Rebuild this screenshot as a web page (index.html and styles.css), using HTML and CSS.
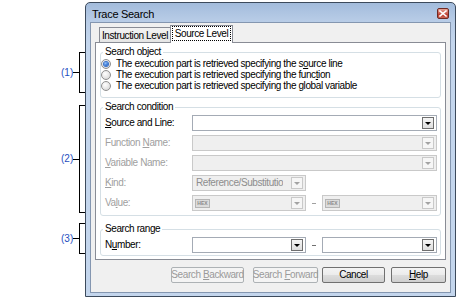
FILE: index.html
```html
<!DOCTYPE html>
<html>
<head>
<meta charset="utf-8">
<title>Trace Search</title>
<link rel="stylesheet" href="styles.css">
</head>
<body>
<div class="page">
  <div class="notes">
    <div class="note n1"><span class="num">(1)</span><span class="dash"></span><span class="brk"></span></div>
    <div class="note n2"><span class="num">(2)</span><span class="dash"></span><span class="brk"></span></div>
    <div class="note n3"><span class="num">(3)</span><span class="dash"></span><span class="brk"></span></div>
  </div>
  <div class="window">
    <div class="titlebar">
      <span class="title">Trace Search</span>
      <span class="close"><svg width="8" height="7" viewBox="0 0 8 7"><path d="M1 1L7 6M7 1L1 6" stroke="#fff" stroke-width="1.6" stroke-linecap="square"/></svg></span>
    </div>
    <div class="client">
      <div class="tabs">
        <div class="tab"><span>Instruction Level</span></div>
        <div class="tab active"><span class="focus">Source Level</span></div>
      </div>
      <div class="panel">
        <fieldset class="group g1">
          <legend>Search object</legend>
          <div class="radio"><span class="rb on"></span><span>The execution part is retrieved specifying the s<u>o</u>urce line</span></div>
          <div class="radio"><span class="rb"></span><span>The execution part is retrieved specifying the func<u>t</u>ion</span></div>
          <div class="radio"><span class="rb"></span><span>The execution part is retrieved specifying the <u>g</u>lobal variable</span></div>
        </fieldset>
        <fieldset class="group g2">
          <legend>Search condition</legend>
          <div class="row"><span class="lbl"><u>S</u>ource and Line:</span><div class="combo wide"><span class="btn"></span></div></div>
          <div class="row dis"><span class="lbl">Function <u>N</u>ame:</span><div class="combo wide"><span class="btn"></span></div></div>
          <div class="row dis"><span class="lbl"><u>V</u>ariable Name:</span><div class="combo wide"><span class="btn"></span></div></div>
          <div class="row dis"><span class="lbl"><u>K</u>ind:</span><div class="combo sm"><span class="val">Reference/Substitutio</span><span class="btn"></span></div></div>
          <div class="row dis"><span class="lbl">Va<u>l</u>ue:</span><div class="combo sm"><span class="hex">HEX</span><span class="btn"></span></div><span class="sep"></span><div class="combo sm2"><span class="hex">HEX</span><span class="btn"></span></div></div>
        </fieldset>
        <fieldset class="group g3">
          <legend>Search range</legend>
          <div class="row"><span class="lbl">N<u>u</u>mber:</span><div class="combo sm"><span class="btn"></span></div><span class="sep"></span><div class="combo sm2"><span class="btn"></span></div></div>
        </fieldset>
      </div>
      <div class="buttons">
        <span class="b off bk"><span>Search <u>B</u>ackward</span></span>
        <span class="b off fw"><span>Search <u>F</u>orward</span></span>
        <span class="b cn"><span>Cancel</span></span>
        <span class="b hp"><span><u>H</u>elp</span></span>
      </div>
    </div>
  </div>
</div>
</body>
</html>
```

FILE: styles.css
```css
* { box-sizing: border-box; }
html, body { margin: 0; padding: 0; }
body {
  width: 474px;
  height: 301px;
  overflow: hidden;
  background: #fff;
  color: #000;
  font-family: "Liberation Sans", Arial, sans-serif;
  font-size: 10px;
  letter-spacing: -0.4px;
  line-height: 12px;
  white-space: nowrap;
}
u { text-decoration: underline; text-underline-offset: 1px; }

.page { display: flex; align-items: flex-start; }

/* annotations */
.notes { width: 85px; flex: none; padding-top: 52px; display: flex; flex-direction: column; }
.note { display: flex; align-items: center; padding-left: 61px; }
.n1 { height: 41px; }
.n2 { height: 108px; margin-top: 12px; }
.n3 { height: 31px; margin-top: 10px; }
.num { width: 11px; color: #1f4fbf; letter-spacing: 0; }
.dash { width: 6px; height: 1px; margin-left: 1px; background: #000; }
.brk { width: 6px; height: 100%; border: 1px solid #000; border-right: none; }

/* window */
.window {
  width: 371px;
  height: 295px;
  margin-top: 2px;
  border: 1px solid #3c4a5c;
  border-radius: 5px 5px 0 0;
  background: linear-gradient(#a3bcdc 0, #b9cde7 19px, #c4d6ed 40px, #c4d6ed 100%);
  display: flex;
  flex-direction: column;
}
.titlebar {
  height: 19px;
  flex: none;
  display: flex;
  align-items: center;
  justify-content: space-between;
  padding: 2px 6px 0 6px;
}
.title { font-size: 11px; letter-spacing: -0.3px; }
.close {
  width: 12px;
  height: 11px;
  border: 1px solid #6e2a24;
  border-radius: 2px;
  background: linear-gradient(#e7a395, #c9584a 50%, #b8382b 51%, #c8604f);
  display: flex;
  align-items: center;
  justify-content: center;
}
.client {
  margin: 0 4px 3px;
  height: 271px;
  flex: none;
  border: 1px solid #8496b0;
  background: #f0f0f0;
  display: flex;
  flex-direction: column;
}

/* tabs */
.tabs {
  height: 20px;
  flex: none;
  margin-bottom: -1px;
  padding-left: 8px;
  display: flex;
  align-items: flex-end;
  position: relative;
  z-index: 1;
}
.tab {
  height: 15px;
  margin-bottom: 1px;
  width: 72px;
  border: 1px solid #898c95;
  border-bottom: none;
  background: linear-gradient(#f3f3f3, #e5e5e5);
  display: flex;
  align-items: center;
  justify-content: center;
  padding-top: 1px;
}
.tab.active {
  height: 18px;
  margin-bottom: 0;
  width: 63px;
  margin-left: -1px;
  background: #fff;
  padding-top: 0;
  padding-bottom: 2px;
}
.focus { outline: 1px dotted #000; outline-offset: 0; padding: 1px 2px 0; line-height: 12px; }

.panel {
  margin-left: 4px;
  width: 351px;
  height: 218px;
  flex: none;
  border: 1px solid #898c95;
  background: #fff;
  padding: 3px 4px 0;
}

/* group boxes */
fieldset.group {
  display: block;
  margin: 0;
  min-width: 0;
  border: 1px solid #d5dfe5;
  border-radius: 3px;
  padding: 0 2px 0 0;
}
legend { margin-left: 2px; padding: 0 2px; height: 12px; line-height: 12px; }
fieldset.g1 { padding-bottom: 6px; }
fieldset.g2 { margin-top: 3px; padding-bottom: 4px; }
fieldset.g3 { margin-top: 7px; padding-bottom: 2px; }

.radio { display: flex; align-items: center; height: 11px; }
.rb {
  width: 10px;
  height: 10px;
  flex: none;
  border-radius: 50%;
  border: 1px solid #8f8f8f;
  background: radial-gradient(circle at 40% 35%, #ffffff 0, #eaeaea 45%, #cfcfcf 100%);
  margin-right: 5px;
  display: flex;
  align-items: center;
  justify-content: center;
}
.rb.on::after {
  content: "";
  width: 4px;
  height: 4px;
  border-radius: 50%;
  background: radial-gradient(circle at 40% 35%, #8fc3ff, #1c5fc8 70%);
  box-shadow: 0 0 0 1px #3b73c9;
}

.row { display: flex; align-items: center; height: 16px; padding-left: 4px; margin-top: 4px; }
.g2 .row:first-of-type, .g3 .row { margin-top: 2px; }
.lbl { width: 87px; flex: none; }
.row.dis .lbl { color: #a0a0a0; }

.combo {
  height: 16px;
  flex: none;
  border: 1px solid #a4abb5;
  background: #fff;
  display: flex;
  align-items: center;
  justify-content: flex-end;
  padding: 0 2px 0 1px;
}
.combo.wide { width: 245px; }
.combo.sm { width: 114px; }
.combo.sm2 { width: 115px; }
.btn {
  width: 12px;
  height: 12px;
  flex: none;
  margin-left: auto;
  border: 1px solid #6f6f6f;
  background: linear-gradient(#f5f5f5, #dedede);
  display: flex;
  align-items: center;
  justify-content: center;
}
.btn::after {
  content: "";
  border-left: 3px solid transparent;
  border-right: 3px solid transparent;
  border-top: 3px solid #000;
}
.dis .combo { background: #efefef; border-color: #c9c9c9; }
.dis .btn { border-color: #c9c9c9; background: #f6f6f6; }
.dis .btn::after { border-top-color: #a3a3a3; }
.val { color: #8d8d8d; padding-left: 2px; overflow: hidden; }
.hex {
  width: 15px;
  height: 9px;
  margin-left: 1px;
  border: 1px solid #b5b5b5;
  background: #dcdcdc;
  color: #8a8a8a;
  font-size: 5px;
  letter-spacing: 0;
  line-height: 7px;
  text-align: center;
  font-weight: bold;
}
.sep { width: 16px; flex: none; display: flex; justify-content: center; }
.sep::after { content: ""; width: 4px; height: 1px; background: #707070; }
.dis .sep::after { background: #a0a0a0; }

/* buttons */
.buttons {
  display: flex;
  justify-content: flex-end;
  margin-top: 7px;
  padding-right: 4px;
}
.b {
  height: 16px;
  border: 1px solid #707070;
  border-radius: 2px;
  background: linear-gradient(#f4f4f4, #ebebeb 50%, #dddddd 51%, #cfcfcf);
  display: flex;
  align-items: center;
  justify-content: center;
}
.b.off { border-color: #adb2b5; background: #f4f4f4; color: #9a9a9a; }
.bk { width: 73px; }
.fw { width: 65px; margin-left: 9px; }
.cn { width: 63px; margin-left: 4px; }
.hp { width: 55px; margin-left: 6px; }
```
